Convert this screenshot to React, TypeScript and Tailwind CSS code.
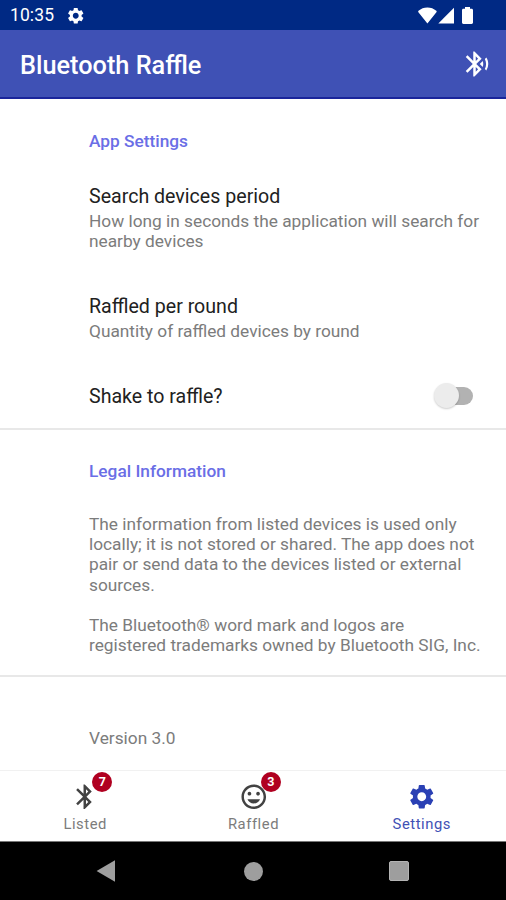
import clsx from "clsx";
import type { ReactNode } from "react";
import {
    MdBluetooth,
    MdBluetoothSearching,
    MdMood,
    MdSettings,
} from "react-icons/md";

function StatusBar() {
    return (
        <div className="flex h-[30px] items-center bg-[#002984] pl-[10px] pr-[33px] text-white">
            <span className="text-[17.5px] leading-none tracking-[0.1px] mt-[2px]">10:35</span>
            <MdSettings size={19.5} className="ml-[12px] mt-[2px]" />
            <div className="ml-auto flex items-center">
                <svg width="19" height="17" viewBox="0 0 19 17" fill="currentColor">
                    <path d="M.4 5.2C0 4.8 0 4.2.5 3.8 3 1.6 6 .4 9.4.4s6.4 1.2 8.9 3.4c.5.4.5 1 .1 1.4L9.4 16.4z" />
                </svg>
                <svg width="16" height="17" viewBox="0 0 16 17" fill="currentColor" className="ml-px">
                    <path d="M16 .8v15.7H.3z" />
                </svg>
                <svg width="11" height="17" viewBox="0 0 11 17" fill="currentColor" className="ml-[8px]">
                    <path d="M3 0h5v1.8h1.6c.8 0 1.4.6 1.4 1.4v12.4c0 .8-.6 1.4-1.4 1.4H1.4C.6 17 0 16.4 0 15.6V3.2c0-.8.6-1.4 1.4-1.4H3z" />
                </svg>
            </div>
        </div>
    );
}

function AppBar() {
    return (
        <header className="flex h-[69px] items-center justify-between border-b-2 border-[#1a259b] bg-[#3f51b5] pl-[20px] pr-[14px] text-white">
            <h1 className="text-[25.3px] font-medium leading-none mt-[4px]">Bluetooth Raffle</h1>
            <MdBluetoothSearching size={30} />
        </header>
    );
}

function SectionTitle({ children }: { children: ReactNode }) {
    return (
        <h2 className="text-[17.3px] font-medium leading-[20px] text-[#6a6ee6]">
            {children}
        </h2>
    );
}

function Preference({ title, summary }: { title: string; summary?: string }) {
    return (
        <div>
            <div className="text-[19.6px] leading-[24px] text-[#212121]">{title}</div>
            {summary && (
                <div className="mt-[2px] text-[17.3px] leading-[20.2px] text-[#7c7c7c]">{summary}</div>
            )}
        </div>
    );
}

function Switch() {
    return (
        <div className="flex h-[18px] w-[37px] items-center rounded-full bg-[#b2b2b2]">
            <div className="-ml-[2px] size-[25px] shrink-0 rounded-full bg-[#ececec] shadow-[0_1px_2px_rgba(0,0,0,0.2)]" />
        </div>
    );
}

interface NavItemProps {
    icon: ReactNode;
    label: string;
    badge?: number;
    active?: boolean;
}

function NavItem({ icon, label, badge, active }: NavItemProps) {
    return (
        <div
            className={clsx(
                "flex flex-1 flex-col items-center pt-[11px]",
                active ? "text-[#3f51b5]" : "text-[#7c7c7c]"
            )}
        >
            <div className={clsx("relative", active ? "text-[#2a40b4]" : "text-[#424242]")}>
                {icon}
                {badge !== undefined && (
                    <span className="absolute -top-[10px] left-[22px] flex size-[20px] items-center justify-center rounded-full bg-[#b00020] text-[12.5px] font-bold text-white">
                        {badge}
                    </span>
                )}
            </div>
            <span className="mt-[3px] text-[14.8px] leading-[18px] tracking-[0.55px]">{label}</span>
        </div>
    );
}

function SystemBar() {
    return (
        <div className="flex h-[59px] items-center border-t border-[#777] bg-black pl-[96px] text-[#9e9e9e]">
            <svg width="19" height="22" viewBox="0 0 19 22" fill="currentColor">
                <path d="M19 .3v21.4L.6 11z" />
            </svg>
            <div className="ml-[129px] size-[19px] rounded-full bg-[#9e9e9e]" />
            <div className="ml-[126px] size-[20px] rounded-[2px] border border-[#b4b4b4] bg-[#9e9e9e]" />
        </div>
    );
}

export default function App() {
    return (
        <div className="flex h-[900px] w-[506px] flex-col overflow-hidden bg-white font-['Roboto',sans-serif]">
            <StatusBar />
            <AppBar />

            <main className="flex flex-1 flex-col">
                {/* App settings */}
                <section className="h-[331px] border-b-2 border-[#e8e8e8] pl-[89px] pr-[20px] pt-[32px]">
                    <SectionTitle>App Settings</SectionTitle>
                    <div className="mt-[34px]">
                        <Preference
                            title="Search devices period"
                            summary="How long in seconds the application will search for nearby devices"
                        />
                    </div>
                    <div className="mt-[44px]">
                        <Preference title="Raffled per round" summary="Quantity of raffled devices by round" />
                    </div>
                    <div className="mt-[43px] flex items-center justify-between pr-[13px]">
                        <Preference title="Shake to raffle?" />
                        <div className="-mt-[2px]">
                            <Switch />
                        </div>
                    </div>
                </section>

                {/* Legal */}
                <section className="h-[247px] border-b-2 border-[#e8e8e8] pl-[89px] pr-[20px] pt-[31px]">
                    <SectionTitle>Legal Information</SectionTitle>
                    <div className="mt-[33px] text-[17.3px] leading-[20.2px] text-[#7c7c7c]">
                        <p>
                            The information from listed devices is used only
                            <br />
                            locally; it is not stored or shared. The app does not
                            <br />
                            pair or send data to the devices listed or external
                            <br />
                            sources.
                        </p>
                        <p className="mt-[20px]">
                            The Bluetooth® word mark and logos are
                            <br />
                            registered trademarks owned by Bluetooth SIG, Inc.
                        </p>
                    </div>
                </section>

                <div className="pl-[89px] pt-[51px] text-[17.3px] leading-[20px] text-[#7c7c7c]">
                    Version 3.0
                </div>
            </main>

            <nav className="flex h-[71px] border-t border-[#f1f1f1] pl-px">
                <NavItem icon={<MdBluetooth size={29.5} />} label="Listed" badge={7} />
                <NavItem icon={<MdMood size={29.5} />} label="Raffled" badge={3} />
                <NavItem icon={<MdSettings size={29.5} />} label="Settings" active />
            </nav>
            <SystemBar />
        </div>
    );
}
